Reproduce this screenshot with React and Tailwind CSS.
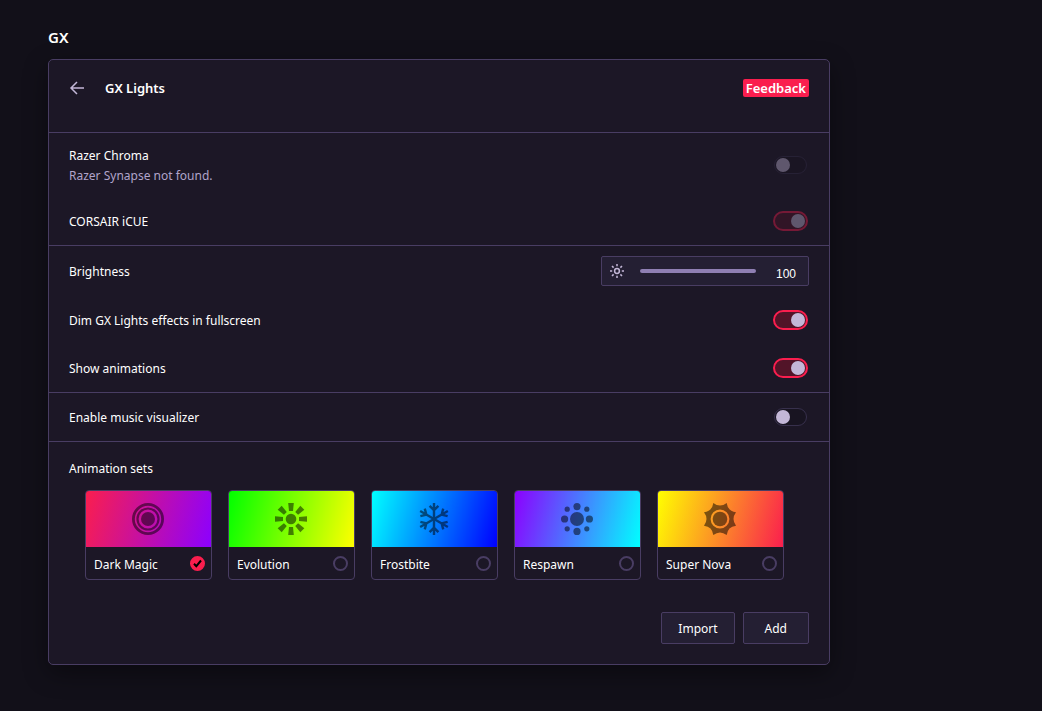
import React, { useState } from 'react';

function Toggle({ id, checked, disabled, onChange }) {
  return (
    <input
      id={id}
      type="checkbox"
      checked={checked}
      disabled={disabled}
      onChange={onChange}
      className="m-0.5 h-[18px] w-[33px] shrink-0 appearance-none rounded-full border border-[#37304c] bg-[#181421] p-px before:block before:size-3.5 before:rounded-full before:bg-[#c3b7d7] checked:m-px checked:h-5 checked:w-[35px] checked:border-2 checked:border-[#fa1e4e] checked:bg-[#521428] checked:before:ml-auto disabled:opacity-40"
    />
  );
}

function ToggleRow({ id, title, note, checked, disabled, onChange, style }) {
  return (
    <div className={`flex items-center justify-between px-5 ${style || 'h-12'}`}>
      <label htmlFor={id} className="pt-0.5 leading-5">
        {title}
        {note && <span className="block text-[#b0a4ca]">{note}</span>}
      </label>
      <Toggle id={id} checked={checked} disabled={disabled} onChange={onChange} />
    </div>
  );
}

function DarkMagicIcon() {
  return (
    <svg viewBox="0 0 32 32" className="size-8">
      <circle cx="16" cy="16" r="7" />
      <circle cx="16" cy="16" r="10.5" fill="none" stroke="#000" strokeWidth="2.2" />
      <circle cx="16" cy="16" r="14.6" fill="none" stroke="#000" strokeWidth="2.8" />
    </svg>
  );
}

function EvolutionIcon() {
  return (
    <svg viewBox="0 0 32 32" className="size-8">
      <circle cx="16" cy="16" r="5.3" />
      {[0, 45, 90, 135, 180, 225, 270, 315].map((angle) => (
        <path key={angle} d="M13.2 0h5.6l-.8 8h-4z" transform={`rotate(${angle} 16 16)`} />
      ))}
    </svg>
  );
}

function FrostbiteIcon() {
  return (
    <svg viewBox="0 0 32 32" className="size-8" fill="none" stroke="#000" strokeWidth="2.4">
      {[0, 60, 120, 180, 240, 300].map((angle) => (
        <path key={angle} d="M16 16V0M11.6 2.8L16 7.2l4.4-4.4" transform={`rotate(${angle} 16 16)`} />
      ))}
    </svg>
  );
}

function RespawnIcon() {
  return (
    <svg viewBox="0 0 32 32" className="size-8">
      <circle cx="16" cy="16" r="7" />
      <circle cx="16" cy="3.6" r="3.6" />
      <circle cx="16" cy="28.4" r="3.6" />
      <circle cx="3.6" cy="16" r="3.6" />
      <circle cx="28.4" cy="16" r="3.6" />
      <circle cx="6.2" cy="6.2" r="2.6" />
      <circle cx="25.8" cy="6.2" r="2.6" />
      <circle cx="6.2" cy="25.8" r="2.6" />
      <circle cx="25.8" cy="25.8" r="2.6" />
    </svg>
  );
}

function SuperNovaIcon() {
  return (
    <svg viewBox="0 0 32 32" className="size-8">
      <path
        fillRule="evenodd"
        d="M9.3 0Q16 5 22.7 0Q23.6 8.2 32 9.3Q27 16 32 22.7Q23.6 23.8 22.7 32Q16 27 9.3 32Q8.400 23.8 0 22.7Q5 16 0 9.3Q8.400 8.2 9.3 0ZM16 6.6a9.400 9.400 0 1 0 0 18.8a9.400 9.400 0 1 0 0-18.8Z"
      />
      <circle cx="16" cy="16" r="7.3" />
    </svg>
  );
}

const sets = [
  { name: 'Dark Magic', icon: DarkMagicIcon, bg: 'bg-[linear-gradient(105deg,#fa1e4e,#8c00ff)]' },
  { name: 'Evolution', icon: EvolutionIcon, bg: 'bg-[linear-gradient(105deg,#00ff00,#ffff00)]' },
  { name: 'Frostbite', icon: FrostbiteIcon, bg: 'bg-[linear-gradient(105deg,#00ffff,#0000ff)]' },
  { name: 'Respawn', icon: RespawnIcon, bg: 'bg-[linear-gradient(105deg,#8c00ff,#00ffff)]' },
  { name: 'Super Nova', icon: SuperNovaIcon, bg: 'bg-[linear-gradient(105deg,#ffff00,#fa1e4e)]' },
];

function SetCard({ set, selected, onSelect }) {
  const Icon = set.icon;
  return (
    <label className="w-[127px] overflow-hidden rounded border border-[#493d63]">
      <div className={`flex h-14 items-center justify-center pr-0.5 ${set.bg}`}>
        <div className="opacity-50">
          <Icon />
        </div>
      </div>
      <div className="flex h-8 items-center justify-between pt-px pr-1.5 pl-2">
        <span className="pt-0.5 leading-5">{set.name}</span>
        <span className="grid place-items-center">
          <input
            type="radio"
            name="animation-set"
            checked={selected}
            onChange={onSelect}
            className="col-start-1 row-start-1 size-[15px] appearance-none rounded-full border-2 border-[#493d63] checked:border-[#fa1e4e] checked:bg-[#fa1e4e]"
          />
          {selected && (
            <svg
              viewBox="0 0 15 15"
              className="pointer-events-none col-start-1 row-start-1 size-[15px]"
              fill="none"
              stroke="#000"
              strokeWidth="2"
            >
              <path d="M4 7.7l2.3 2.5L11 4.5" />
            </svg>
          )}
        </span>
      </div>
    </label>
  );
}

export default function App() {
  const [brightness, setBrightness] = useState(100);
  const [dim, setDim] = useState(true);
  const [animations, setAnimations] = useState(true);
  const [music, setMusic] = useState(false);
  const [selected, setSelected] = useState('Dark Magic');

  return (
    <div className="min-h-screen bg-[#121019] px-12 pt-[27px] pb-11 font-['Noto_Sans',sans-serif] text-xs text-white">
      <h1 className="text-[15px] leading-5 font-semibold">GX</h1>

      <main className="mt-3 max-w-[782px] rounded-[5px] border border-[#493d63] bg-[#1c1726] shadow-[0_8px_24px_rgba(0,0,0,0.4)]">
        <header className="flex h-[73px] items-start justify-between border-b border-[#493d63] px-5 pt-[18px] text-[13px]">
          <div className="flex items-center gap-5">
            <button type="button" aria-label="Back" className="size-4">
              <svg viewBox="0 0 16 16" className="size-4" fill="none" stroke="#c3b7d7" strokeWidth="1.5">
                <path d="M15 8H2M8 2L2 8l6 6" />
              </svg>
            </button>
            <h2 className="leading-5 font-semibold">GX Lights</h2>
          </div>
          <a href="#feedback" className="mt-px rounded-xs bg-[#fa1e4e] px-[3px] leading-[18px] font-semibold">
            Feedback
          </a>
        </header>

        <section className="border-b border-[#493d63]">
          <ToggleRow
            id="razer"
            title="Razer Chroma"
            note="Razer Synapse not found."
            checked={false}
            disabled
            style="h-16"
          />
          <ToggleRow id="corsair" title="CORSAIR iCUE" checked disabled />
        </section>

        <section className="border-b border-[#493d63]">
          <div className="flex h-[50px] items-center justify-between px-5">
            <label htmlFor="brightness" className="pt-0.5 leading-5">
              Brightness
            </label>
            <div className="flex h-[30px] w-52 items-center rounded-xs border border-[#493d63] bg-[#241f33] pr-3 pl-2">
              <svg viewBox="0 0 14 14" className="size-3.5" fill="none" stroke="#c3b7d7" strokeWidth="1.5">
                <circle cx="7" cy="7" r="2.4" />
                <path d="M7 0v2.2M7 11.8v2.2M0 7h2.2M11.8 7h2.2M2 2l1.6 1.6M10.4 10.4l1.6 1.6M2 12l1.6-1.6M10.4 3.6l1.6-1.6" />
              </svg>
              <input
                id="brightness"
                type="range"
                min="0"
                max="100"
                value={brightness}
                onChange={(e) => setBrightness(Number(e.target.value))}
                className="ml-4 h-1 w-[116px] appearance-none rounded-full bg-[#8f7fb3] [&::-webkit-slider-thumb]:opacity-0"
              />
              <output htmlFor="brightness" className="ml-auto pt-1.5 font-['Liberation_Sans',sans-serif] leading-5">
                {brightness}
              </output>
            </div>
          </div>
          <ToggleRow
            id="dim"
            title="Dim GX Lights effects in fullscreen"
            checked={dim}
            onChange={() => setDim(!dim)}
          />
          <ToggleRow
            id="animations"
            title="Show animations"
            checked={animations}
            onChange={() => setAnimations(!animations)}
          />
        </section>

        <section className="border-b border-[#493d63]">
          <ToggleRow
            id="music"
            title="Enable music visualizer"
            checked={music}
            onChange={() => setMusic(!music)}
          />
        </section>

        <section className="px-5 pt-4 pb-5">
          <h3 className="pt-px leading-5">Animation sets</h3>
          <div className="mt-[11px] flex flex-wrap gap-4 px-4">
            {sets.map((set) => (
              <SetCard
                key={set.name}
                set={set}
                selected={selected === set.name}
                onSelect={() => setSelected(set.name)}
              />
            ))}
          </div>
          <div className="mt-8 flex justify-end gap-2">
            <button type="button" className="h-8 rounded-xs border border-[#493d63] bg-[#241f33] px-4 pt-0.5 leading-5">
              Import
            </button>
            <button type="button" className="h-8 rounded-xs border border-[#493d63] bg-[#241f33] px-[21px] pt-0.5 leading-5">
              Add
            </button>
          </div>
        </section>
      </main>
    </div>
  );
}
